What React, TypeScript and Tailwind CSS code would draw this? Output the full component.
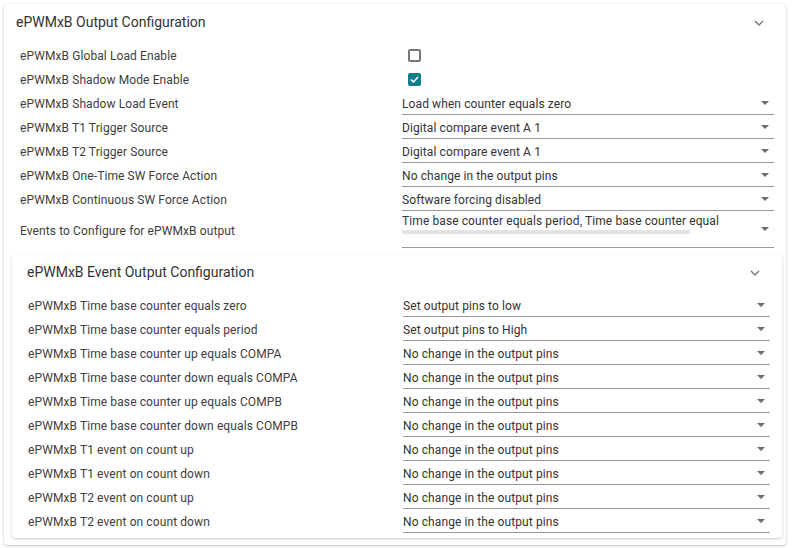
import React from "react";

const font = { fontFamily: "Roboto, 'Noto Sans', Arial, sans-serif" };

function Chevron() {
  return (
    <svg width="10" height="6" viewBox="0 0 10 6" className="block">
      <path d="M1 1 L5 5 L9 1" fill="none" stroke="#757575" strokeWidth="1.4" />
    </svg>
  );
}

function Arrow() {
  return (
    <svg width="8" height="4" viewBox="0 0 8 4" className="block shrink-0">
      <path d="M0 0 L8 0 L4 4 Z" fill="#6b6b6b" />
    </svg>
  );
}

function Select({ value }: { value: string }) {
  return (
    <div className="flex-1 h-full flex items-center justify-between border-b border-[#9a9a9a] pr-[5px]">
      <span className="text-[12px] tracking-[0.1px] text-[#333] leading-none pt-[2px]">{value}</span>
      <Arrow />
    </div>
  );
}

function Row({ label, children, labelW }: { label: string; children: React.ReactNode; labelW: string }) {
  return (
    <div className="flex h-[24px] items-center">
      <div className={`${labelW} shrink-0 text-[12px] tracking-[0.1px] text-[#3d3d3d] pt-[1px]`}>{label}</div>
      {children}
    </div>
  );
}

const outerRows: [string, string][] = [
  ["ePWMxB Shadow Load Event", "Load when counter equals zero"],
  ["ePWMxB T1 Trigger Source", "Digital compare event A 1"],
  ["ePWMxB T2 Trigger Source", "Digital compare event A 1"],
  ["ePWMxB One-Time SW Force Action", "No change in the output pins"],
  ["ePWMxB Continuous SW Force Action", "Software forcing disabled"],
];

const innerRows: [string, string][] = [
  ["ePWMxB Time base counter equals zero", "Set output pins to low"],
  ["ePWMxB Time base counter equals period", "Set output pins to High"],
  ["ePWMxB Time base counter up equals COMPA", "No change in the output pins"],
  ["ePWMxB Time base counter down equals COMPA", "No change in the output pins"],
  ["ePWMxB Time base counter up equals COMPB", "No change in the output pins"],
  ["ePWMxB Time base counter down equals COMPB", "No change in the output pins"],
  ["ePWMxB T1 event on count up", "No change in the output pins"],
  ["ePWMxB T1 event on count down", "No change in the output pins"],
  ["ePWMxB T2 event on count up", "No change in the output pins"],
  ["ePWMxB T2 event on count down", "No change in the output pins"],
];

export default function App() {
  return (
    <div className="w-[792px] h-[548px] bg-white pt-[4px] pl-[4px]" style={font}>
      <div className="w-[782px] h-[541px] rounded-[4px] bg-white shadow-[0_1px_3px_rgba(0,0,0,0.25)] flex flex-col">
        <div className="h-[39px] flex items-center justify-between pl-[12px] pr-[22px] pb-[3px]">
          <span className="text-[14px] text-[#333]">ePWMxB Output Configuration</span>
          <div className="pt-[1px]"><Chevron /></div>
        </div>
        <div className="pl-[16px] pr-[12px] flex flex-col">
          <Row label="ePWMxB Global Load Enable" labelW="w-[382px]">
            <div className="pl-[6px]">
              <div className="w-[13px] h-[13px] rounded-[2px] border-2 border-[#777]" />
            </div>
          </Row>
          <Row label="ePWMxB Shadow Mode Enable" labelW="w-[382px]">
            <div className="pl-[6px]">
              <div className="w-[13px] h-[13px] rounded-[2px] bg-[#127d8c] flex items-center justify-center">
                <svg width="9" height="7" viewBox="0 0 9 7">
                  <path d="M1 3.5 L3.4 6 L8 1" fill="none" stroke="white" strokeWidth="1.5" />
                </svg>
              </div>
            </div>
          </Row>
          {outerRows.map(([l, v]) => (
            <Row key={l} label={l} labelW="w-[382px]">
              <Select value={v} />
            </Row>
          ))}
          <div className="flex h-[37px] items-center">
            <div className="w-[382px] shrink-0 text-[12px] tracking-[0.1px] text-[#3d3d3d] pt-[2px]">Events to Configure for ePWMxB output</div>
            <div className="flex-1 h-full flex items-center justify-between border-b border-[#9a9a9a] pr-[5px]">
              <div className="flex flex-col self-start pt-[3px]">
                <span className="text-[12px] tracking-[0.1px] text-[#333] leading-[14px] whitespace-nowrap">
                  Time base counter equals period, Time base counter equal
                </span>
                <div className="mt-[2px] w-[288px] h-[4px] bg-[#e3e3e3]" />
              </div>
              <Arrow />
            </div>
          </div>
        </div>
        <div className="mt-[7px] ml-[8px] mr-[4px] h-[283px] rounded-[4px] bg-white shadow-[0_1px_3px_rgba(0,0,0,0.22)] flex flex-col">
          <div className="h-[38px] flex items-center justify-between pl-[15px] pr-[22px] pb-[3px]">
            <span className="text-[14px] text-[#333]">ePWMxB Event Output Configuration</span>
            <div className="pt-[1px]"><Chevron /></div>
          </div>
          <div className="pl-[16px] pr-[12px] flex flex-col">
            {innerRows.map(([l, v]) => (
              <Row key={l} label={l} labelW="w-[375px]">
                <Select value={v} />
              </Row>
            ))}
          </div>
        </div>
      </div>
    </div>
  );
}
